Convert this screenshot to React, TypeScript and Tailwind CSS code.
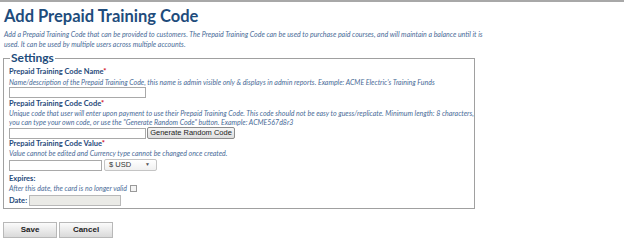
const label = "block text-[7.5px] leading-[10px] font-bold text-[#1f4a7a]";
const help = "block text-[7px] leading-[9px] italic text-[#4a6c98] whitespace-nowrap";
const input = "block h-[11px] border border-[#a9a9a9] bg-white";

const Req = () => <span className="text-[#d0021b]">*</span>;

const App = () => {
  return (
    <div
      className="w-[624px] h-[251px] overflow-hidden bg-white border-t-2 border-[#a8a8a8]"
      style={{ fontFamily: 'Lato, "Open Sans", sans-serif' }}
    >
      <div className="px-[3px]">
        <h1 className="mt-[3px] pl-[1px] text-[16.5px] leading-[22px] font-bold text-[#1e4c7c]">
          Add Prepaid Training Code
        </h1>
        <p className="mt-[2px] pl-[1px] whitespace-nowrap text-[7px] leading-[10px] italic text-[#4a6c98]">
          Add a Prepaid Training Code that can be provided to customers. The Prepaid Training Code can be used to
          purchase paid courses, and will maintain a balance until it is
          <br />
          used. It can be used by multiple users across multiple accounts.
        </p>

        <fieldset className="mt-[2px] w-[469px] border border-[#a0a0a0] pl-[5px] pb-[2px]">
          <legend className="ml-[1px] px-[1px] text-[12px] leading-[14px] font-bold text-[#1e4c7c]">
            Settings
          </legend>

          <div className="mt-[2px]">
            <span className={label}>
              Prepaid Training Code Name<Req />
            </span>
            <span className={`${help} leading-[10px]`}>
              Name/description of the Prepaid Training Code, this name is admin visible only &amp; displays in admin
              reports. Example: ACME Electric's Training Funds
            </span>
            <input className={`${input} w-[137px]`} />
          </div>

          <div className="mt-[1px]">
            <span className={label}>
              Prepaid Training Code Code<Req />
            </span>
            <span className={help}>
              Unique code that user will enter upon payment to use their Prepaid Training Code. This code should not
              be easy to guess/replicate. Minimum length: 8 characters,
              <br />
              you can type your own code, or use the "Generate Random Code" button. Example: ACME567d8r3
            </span>
            <div className="flex items-center gap-[1px]">
              <input className={`${input} w-[137px]`} />
              <button
                className="h-[12px] w-[88px] whitespace-nowrap rounded-[2px] border border-[#8c8c8c] bg-gradient-to-b from-[#f6f6f6] to-[#dedede] px-0 text-[7.5px] leading-[10px] text-[#222]"
                style={{ fontFamily: '"Liberation Sans", Arial, sans-serif' }}
              >
                Generate Random Code
              </button>
            </div>
          </div>

          <div>
            <span className={label}>
              Prepaid Training Code Value<Req />
            </span>
            <span className={help}>
              Value cannot be edited and Currency type cannot be changed once created.
            </span>
            <div className="mt-[1px] flex items-center gap-[2px]">
              <input className={`${input} w-[93px]`} />
              <div
                className="flex h-[12px] w-[53px] items-center justify-between rounded-[2px] border border-[#c4c4c4] bg-gradient-to-b from-white to-[#f0f0f0] pl-[4px] pr-[6px] text-[7.5px] text-[#333]"
                style={{ fontFamily: '"Liberation Sans", Arial, sans-serif' }}
              >
                <span>$ USD</span>
                <span className="text-[5px] text-[#555]">▼</span>
              </div>
            </div>
          </div>

          <div className="mt-[3px]">
            <span className={label}>Expires:</span>
            <div className="flex items-center gap-[3px]">
              <span className={help}>After this date, the card is no longer valid</span>
              <span className="h-[7px] w-[7px] border border-[#9a9a9a] bg-[#f4f4f4]" />
            </div>
            <div className="mt-[2px] flex items-center gap-[2px]">
              <span className={label}>Date:</span>
              <input className="h-[11px] w-[92px] border border-[#b8b8b8] bg-[#eaeae6]" disabled />
            </div>
          </div>
        </fieldset>

        <div
          className="mt-[13px] flex gap-[2px]"
          style={{ fontFamily: '"Liberation Sans", Arial, sans-serif' }}
        >
          <button className="h-[16px] w-[54px] border border-[#b8b8b8] bg-gradient-to-b from-[#fbfbfb] to-[#dadada] text-[8px] font-bold text-[#222]">
            Save
          </button>
          <button className="h-[16px] w-[54px] border border-[#b8b8b8] bg-gradient-to-b from-[#fbfbfb] to-[#dadada] text-[8px] font-bold text-[#222]">
            Cancel
          </button>
        </div>
      </div>
    </div>
  );
};

export default App;
